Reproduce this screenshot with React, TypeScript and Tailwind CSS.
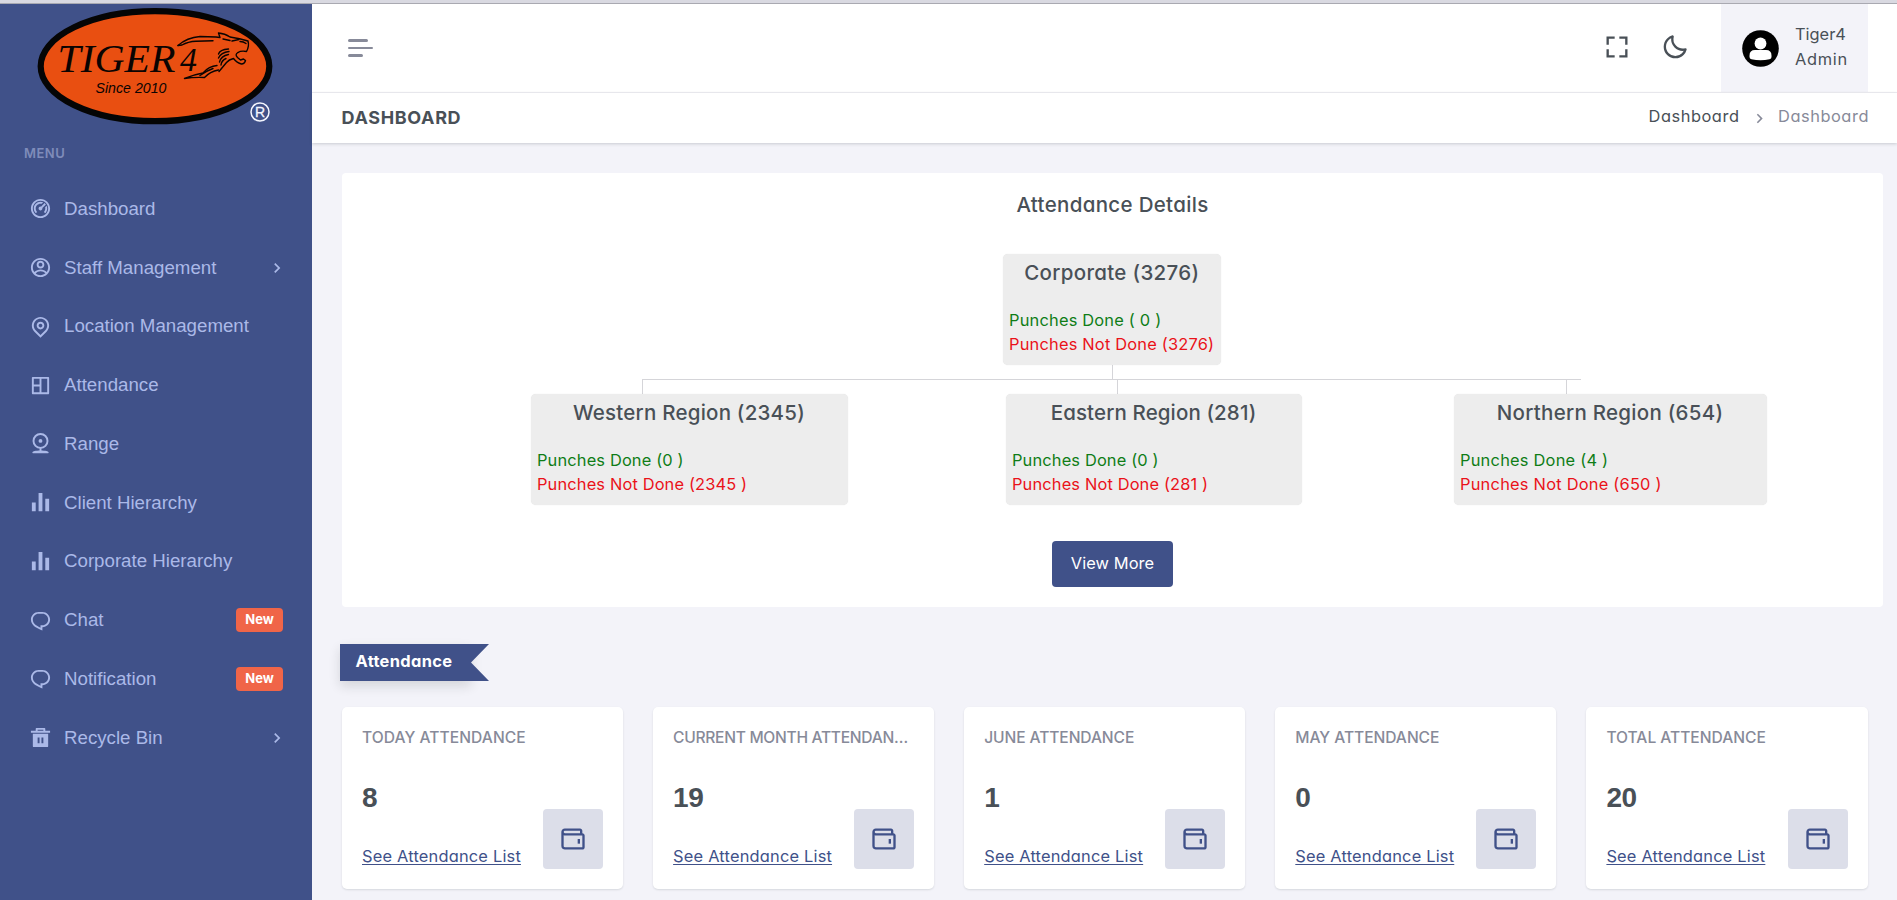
import type { ReactNode } from "react";
import {
  RiDashboard2Line,
  RiAccountCircleLine,
  RiMapPinLine,
  RiLayout4Line,
  RiBarChartFill,
  RiChat1Line,
  RiDeleteBin5Fill,
} from "react-icons/ri";
import { BiFullscreen, BiMoon, BiWallet } from "react-icons/bi";
import { MdChevronRight } from "react-icons/md";

type MenuEntry = {
  label: string;
  icon: (props: { className?: string }) => ReactNode;
  badge?: string;
  expandable?: boolean;
};

function RangeIcon({ className }: { className?: string }) {
  return (
    <svg viewBox="0 0 24 24" className={className}>
      <circle cx="12" cy="9.300" r="7.300" fill="none" stroke="currentColor" strokeWidth="2" />
      <circle cx="12" cy="9.300" r="2" fill="currentColor" />
      <path d="M12 16.500V20" stroke="currentColor" strokeWidth="2" />
      <path d="M3.500 21.300C3.500 19.900 7 19.200 12 19.200S20.500 19.900 20.500 21.300C20.500 22 19.500 22.300 18.500 22.300H5.500C4.500 22.300 3.500 22 3.500 21.300Z" fill="currentColor" />
    </svg>
  );
}

const menu: MenuEntry[] = [
  { label: "Dashboard", icon: RiDashboard2Line },
  { label: "Staff Management", icon: RiAccountCircleLine, expandable: true },
  { label: "Location Management", icon: RiMapPinLine },
  { label: "Attendance", icon: RiLayout4Line },
  { label: "Range", icon: RangeIcon },
  { label: "Client Hierarchy", icon: RiBarChartFill },
  { label: "Corporate Hierarchy", icon: RiBarChartFill },
  { label: "Chat", icon: RiChat1Line, badge: "New" },
  { label: "Notification", icon: RiChat1Line, badge: "New" },
  { label: "Recycle Bin", icon: RiDeleteBin5Fill, expandable: true },
];

function Logo() {
  return (
    <svg width="240" height="122" viewBox="36 6 240 122" className="ml-9 block shrink-0">
      <ellipse cx="155" cy="66.2" rx="114.3" ry="55" fill="#e94f11" stroke="#050505" strokeWidth="6.2" />
      <text x="57.500" y="72" fontFamily="Liberation Serif, serif" fontStyle="italic" fontSize="39.500" textLength="118" lengthAdjust="spacingAndGlyphs" fill="#0b0402">TIGER</text>
      <text x="180" y="71" fontFamily="Liberation Serif, serif" fontStyle="italic" fontSize="33" textLength="17" lengthAdjust="spacingAndGlyphs" fill="#0b0402">4</text>
      <text x="95.5" y="93" fontFamily="Liberation Sans, sans-serif" fontStyle="italic" fontSize="14.5" textLength="71" lengthAdjust="spacingAndGlyphs" fill="#0b0402">Since 2010</text>
      <g fill="none" stroke="#0b0402" strokeWidth="1.4" strokeLinecap="round" strokeLinejoin="round">
        <path d="M178 45.5 Q187 37.5 200 36.5 L216 37 L220 37.5 L218.5 33 Q225 33.5 230 37 Q240 38.5 248 41 Q249.5 46 246.5 51.5 Q241 50.5 238 52.5" />
        <path d="M178 45.5 L182 45 Q188 41.5 196 41.2 L213 40.8" />
        <path d="M223 39 L230 40.5 M232 41 L239 39.5 M240 41.5 Q243.5 41.5 246 43.5" />
        <path d="M238 52.5 Q234.5 54.5 237.5 57.5 L240.5 60 L243.5 59 L245.5 60.5 Q244.5 64 241.5 64 Q237 63 233.5 58.5 Q229 59.5 226.5 62.5 L219 71.5" />
        <path d="M228.5 49 Q220 49.5 218.5 54 M229 51.5 Q221 52.5 218.5 58 M228.5 54.5 Q221 56 219.5 62 M226 58.5 Q221.5 60.5 221 65" />
        <path d="M217 65.5 Q209 66 203 73 Q194 74.5 184.5 78.5 Q194 77 204.5 77.5 Q210 71.5 218.5 70" />
        <path d="M200 75.5 Q206 71 213 68.5" />
      </g>
      <circle cx="260" cy="112" r="9" fill="none" stroke="#f4f6ff" strokeWidth="1.5" />
      <text x="260" y="117" textAnchor="middle" fontFamily="Liberation Sans, sans-serif" fontSize="14" fill="#f4f6ff" stroke="#f4f6ff" strokeWidth="0.3">R</text>
    </svg>
  );
}

function MenuItem({ label, icon: Icon, badge, expandable }: MenuEntry) {
  return (
    <li className="flex h-[58.75px] items-center pr-[29px] pl-[29px] text-[#abb9e8]">
      <Icon className="size-[23px] shrink-0" />
      <span className="ml-3 grow font-['Liberation_Sans',Arial,sans-serif] text-[18.7px] leading-6 whitespace-nowrap">{label}</span>
      {badge && (
        <span className="flex h-6 w-[47px] items-center justify-center rounded bg-[#f06548] text-[13px] font-bold text-white">{badge}</span>
      )}
      {expandable && <MdChevronRight className="-mr-[4px] size-5 shrink-0" />}
    </li>
  );
}

function Sidebar() {
  return (
    <aside className="flex w-[312px] shrink-0 flex-col bg-[#405189] pt-0.5">
      <Logo />
      <div className="mt-[15px] pl-6 text-[13px] leading-5 font-semibold tracking-[0.5px] text-[#7f8cba]">MENU</div>
      <ul className="mt-[16.5px]">
        {menu.map((m) => (
          <MenuItem key={m.label} {...m} />
        ))}
      </ul>
    </aside>
  );
}

function Header() {
  return (
    <header className="flex h-[89px] shrink-0 items-start border-b border-[#eeeef3] bg-white pr-[29px] pl-9">
      <div className="mt-[35px] flex flex-col items-start gap-[5px]">
        <span className="h-[3px] w-5 rounded-full bg-[#878a99]" />
        <span className="h-[2px] w-[25px] rounded-full bg-[#878a99]" />
        <span className="h-[3px] w-[15px] rounded-full bg-[#878a99]" />
      </div>
      <div className="ml-auto flex h-[85px] items-center text-[#495057]">
        <BiFullscreen className="mr-[30px] size-7" />
        <BiMoon className="mr-[32px] size-7" />
      </div>
      <div className="flex h-[88px] w-[147px] bg-[#f3f3f9] pl-[20.5px]">
        <svg width="37" height="37" viewBox="0 0 37 37" className="mt-[25.5px]">
          <circle cx="18.5" cy="18.5" r="18.3" fill="#000" />
          <circle cx="18.5" cy="13.5" r="5.9" fill="#fff" />
          <path d="M7.5 25.5 Q7.5 20 13 20 H24 Q29.5 20 29.5 25.5 V27 Q29.5 29 27.5 29.3 Q18.5 31 9.5 29.3 Q7.5 29 7.5 27 Z" fill="#fff" />
        </svg>
        <div className="mt-[18px] ml-[16.5px] text-[16.4px] leading-[25px] text-[#495057]">
          <div>Tiger4</div>
          <div className="tracking-[0.7px]">Admin</div>
        </div>
      </div>
    </header>
  );
}

function TitleBar() {
  return (
    <div className="relative flex h-[50px] shrink-0 items-center justify-between bg-white pr-[28px] pl-[29.5px] shadow-[0_1px_3px_rgba(56,65,74,0.22)]">
      <h1 className="text-[18px] leading-6 font-bold tracking-[0.65px] text-[#495057]">DASHBOARD</h1>
      <div className="mb-[4px] flex items-center text-[16.4px] leading-6">
        <span className="tracking-[0.55px] text-[#495057]">Dashboard</span>
        <MdChevronRight className="mt-1 mr-[9.5px] ml-[10px] size-[19px] text-[#878a99]" />
        <span className="tracking-[0.55px] text-[#878a99]">Dashboard</span>
      </div>
    </div>
  );
}

function OrgNode(props: { className: string; title: ReactNode; done: string; missing: string; spacing: string }) {
  return (
    <div className={`absolute h-[111px] rounded-[5px] bg-[#ededed] px-[6.5px] shadow-[0_0_1px_rgba(0,0,0,0.15)] ${props.className}`}>
      <h3 className="text-center text-[20.5px] leading-[37px] font-medium whitespace-nowrap text-[#495057]">{props.title}</h3>
      <div className={`mt-[17px] text-[16.4px] leading-6 whitespace-nowrap ${props.spacing}`}>
        <p className="text-[#0f7d17]">{props.done}</p>
        <p className="text-[#ea1219]">{props.missing}</p>
      </div>
    </div>
  );
}

function AttendanceTree() {
  return (
    <section className="relative h-[434px] w-[1541px] shrink-0 rounded bg-white">
      <h2 className="pt-[18px] text-center text-[20.5px] leading-7 font-medium tracking-[0.32px] text-[#495057]">Attendance Details</h2>
      <div className="absolute top-[192px] left-[770px] h-[14px] w-px bg-[#d5d5d9]" />
      <div className="absolute top-[206px] left-[300px] h-px w-[939px] bg-[#d5d5d9]" />
      <div className="absolute top-[206px] left-[300px] h-[15px] w-px bg-[#d5d5d9]" />
      <div className="absolute top-[206px] left-[775px] h-[15px] w-px bg-[#d5d5d9]" />
      <div className="absolute top-[206px] left-[1224px] h-[15px] w-px bg-[#d5d5d9]" />
      <OrgNode className="top-[81px] left-[660.5px] w-[218.5px]" title={<span className="tracking-[0.32px]">Corporate (3276)</span>} done="Punches Done ( 0 )" missing="Punches Not Done (3276)" spacing="tracking-[0.2px]" />
      <OrgNode className="top-[221px] left-[188.5px] w-[317px]" title={<span className="tracking-[0.22px]">Western Region (2345)</span>} done="Punches Done (0 )" missing="Punches Not Done (2345 )" spacing="tracking-[0.15px]" />
      <OrgNode className="top-[221px] left-[663.5px] w-[296px]" title={<span className="tracking-[0.12px]">Eastern Region (281)</span>} done="Punches Done (0 )" missing="Punches Not Done (281 )" spacing="tracking-[0.15px]" />
      <OrgNode className="top-[221px] left-[1111.5px] w-[313px]" title={<span className="tracking-[0.27px]">Northern Region (654)</span>} done="Punches Done (4 )" missing="Punches Not Done (650 )" spacing="tracking-[0.23px]" />
      <button className="absolute top-[368px] left-[710px] h-[46px] w-[121px] rounded bg-[#405189] pb-[2px] text-[16.4px] tracking-[0.1px] text-white">View More</button>
    </section>
  );
}

function Ribbon() {
  return (
    <div className="mt-[37px] -ml-[2px] flex h-[37px] w-[149px] shrink-0">
      <span className="h-full w-[131px] bg-[#405189] pl-[15.5px] text-[16.4px] leading-[34px] font-bold tracking-[0.35px] text-white shadow-[0_5px_12px_rgba(30,32,37,0.14)]">Attendance</span>
      <svg width="18" height="37" viewBox="0 0 18 37" className="relative">
        <path d="M0 0 H18 L0 18.5 L18 37 H0 Z" fill="#405189" />
      </svg>
    </div>
  );
}

const stats = [
  { title: "TODAY ATTENDANCE", value: "8", spacing: "tracking-[0.05px]" },
  { title: "CURRENT MONTH ATTENDAN…", value: "19", spacing: "tracking-[-0.3px]" },
  { title: "JUNE ATTENDANCE", value: "1", spacing: "tracking-[-0.1px]" },
  { title: "MAY ATTENDANCE", value: "0", spacing: "tracking-[-0.05px]" },
  { title: "TOTAL ATTENDANCE", value: "20", spacing: "tracking-[-0.02px]" },
];

function StatCard({ title, value, spacing }: { title: string; value: string; spacing: string }) {
  return (
    <article className="flex h-[182px] min-w-0 flex-col rounded-[5px] bg-white px-5 pt-[19px] shadow-[0_1px_2px_rgba(56,65,74,0.15)]">
      <h3 className={`text-[15.6px] leading-6 font-medium whitespace-nowrap text-[#878a99] ${spacing}`}>{title}</h3>
      <div className="mt-[32px] font-['Liberation_Sans',Arial,sans-serif] text-[28px] leading-8 font-bold tracking-[-0.5px] text-[#495057]">{value}</div>
      <div className="-mt-[5px] flex items-end justify-between">
        <a className="mb-px text-[16.4px] leading-6 tracking-[0.2px] text-[#405189] underline decoration-1 underline-offset-2">See Attendance List</a>
        <span className="flex size-[60px] items-center justify-center rounded bg-[#dcdee9] text-[#405189]">
          <BiWallet className="size-7" />
        </span>
      </div>
    </article>
  );
}

export default function App() {
  return (
    <div className="flex h-[900px] w-full flex-col overflow-hidden bg-[#f3f3f9] font-[Inter,sans-serif] [font-feature-settings:'cv11']">
      <div className="h-1 shrink-0 border-b border-[#a9a9b1] bg-[#d9d9e1]" />
      <div className="flex min-h-0 grow">
        <Sidebar />
        <div className="flex min-w-0 grow flex-col">
          <Header />
          <TitleBar />
          <main className="flex flex-col pt-[30px] pl-[30px]">
            <AttendanceTree />
            <Ribbon />
            <div className="mt-[26px] grid grid-cols-5 gap-[30px] pr-[29.5px]">
              {stats.map((s) => (
                <StatCard key={s.title} {...s} />
              ))}
            </div>
          </main>
        </div>
      </div>
    </div>
  );
}
